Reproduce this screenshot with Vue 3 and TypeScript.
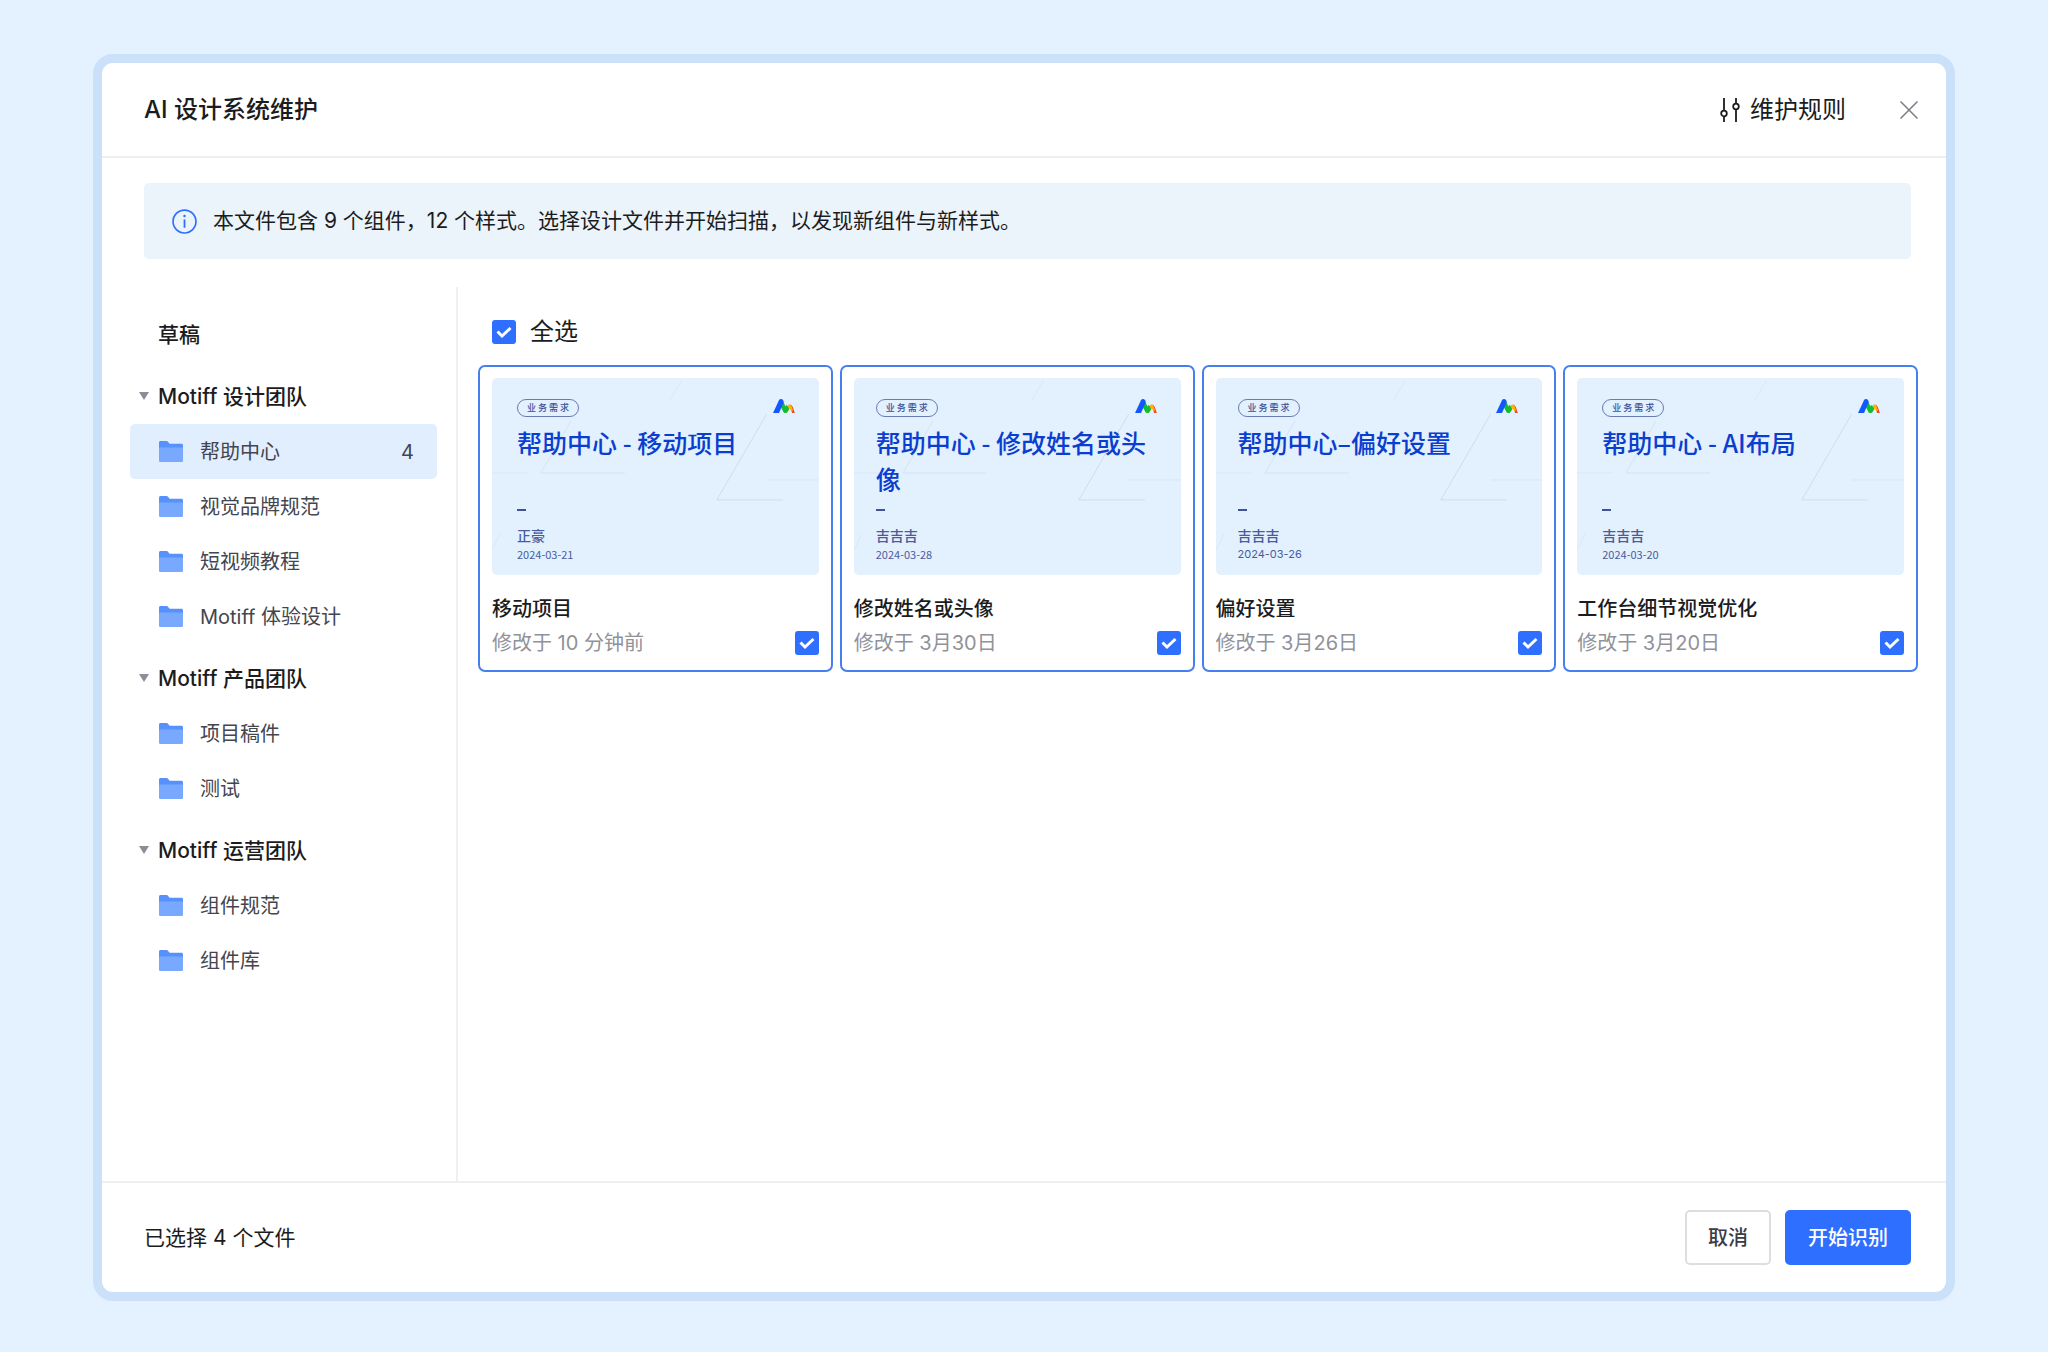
<script setup lang="ts">
import { computed, ref } from 'vue'

interface Folder {
  name: string
  count?: number
}

interface Team {
  name: string
  folders: Folder[]
}

interface DesignFile {
  id: string
  name: string
  modified: string
  cover: string
  author: string
  date: string
  layout: 'loose' | 'snug'
  latinDate?: boolean
}

const teams: Team[] = [
  {
    name: 'Motiff 设计团队',
    folders: [
      { name: '帮助中心', count: 4 },
      { name: '视觉品牌规范' },
      { name: '短视频教程' },
      { name: 'Motiff 体验设计' },
    ],
  },
  { name: 'Motiff 产品团队', folders: [{ name: '项目稿件' }, { name: '测试' }] },
  { name: 'Motiff 运营团队', folders: [{ name: '组件规范' }, { name: '组件库' }] },
]

const files: DesignFile[] = [
  { id: 'move', name: '移动项目', modified: '修改于 10 分钟前', cover: '帮助中心 - 移动项目', author: '正豪', date: '2024-03-21', layout: 'loose' },
  { id: 'profile', name: '修改姓名或头像', modified: '修改于 3月30日', cover: '帮助中心 - 修改姓名或头像', author: '吉吉吉', date: '2024-03-28', layout: 'snug' },
  { id: 'prefs', name: '偏好设置', modified: '修改于 3月26日', cover: '帮助中心–偏好设置', author: '吉吉吉', date: '2024-03-26', layout: 'snug', latinDate: true },
  { id: 'workbench', name: '工作台细节视觉优化', modified: '修改于 3月20日', cover: '帮助中心 - AI布局', author: '吉吉吉', date: '2024-03-20', layout: 'loose' },
]

const activeFolder = ref('帮助中心')
const selected = ref<string[]>(files.map((f) => f.id))

const allSelected = computed({
  get: () => selected.value.length === files.length,
  set: (on: boolean) => {
    selected.value = on ? files.map((f) => f.id) : []
  },
})
</script>

<template>
  <div class="page">
    <section class="dialog" role="dialog" aria-labelledby="dialog-title">
      <header class="header">
        <h1 id="dialog-title" class="title">AI 设计系统维护</h1>
        <div class="header-actions">
          <button type="button" class="rules">
            <svg class="rules-icon" viewBox="0 0 20 24" fill="none" stroke="currentColor" stroke-width="1.8">
              <path d="M4 0v12.4M4 18.6V24M16 0v5.4M16 11.6V24" />
              <circle cx="4" cy="15.5" r="2.8" />
              <circle cx="16" cy="8.5" r="2.8" />
            </svg>
            维护规则
          </button>
          <button type="button" class="close" aria-label="关闭">
            <svg viewBox="0 0 18 18" fill="none" stroke="currentColor" stroke-width="1.5">
              <path d="M.5.5l17 17M17.5.5l-17 17" />
            </svg>
          </button>
        </div>
      </header>

      <div class="notice">
        <svg class="notice-icon" viewBox="0 0 24 24" fill="none" stroke="#2f6fff">
          <circle cx="12" cy="12" r="11" stroke-width="1.6" />
          <path d="M12 10v8" stroke-width="1.7" />
          <circle cx="12" cy="6.8" r="1.2" fill="#2f6fff" stroke="none" />
        </svg>
        <p>本文件包含 9 个组件，12 个样式。选择设计文件并开始扫描，以发现新组件与新样式。</p>
      </div>

      <div class="body">
        <nav class="sidebar">
          <button type="button" class="row heading">草稿</button>
          <div v-for="team in teams" :key="team.name" class="team">
            <button type="button" class="row heading">
              <span class="caret"></span>{{ team.name }}
            </button>
            <button
              v-for="folder in team.folders"
              :key="folder.name"
              type="button"
              class="row folder"
              :class="{ active: folder.name === activeFolder }"
              @click="activeFolder = folder.name"
            >
              <svg class="folder-icon" viewBox="0 0 24 21">
                <path d="M0 1.6C0 .7.7 0 1.6 0h6c.5 0 .9.2 1.2.6l1.3 1.7c.2.3.5.4.8.4h11.5c.9 0 1.600.7 1.600 1.600V12H0z" fill="#5791fb" />
                <path d="M0 7.5C0 7 .4 6.600.9 6.600h22.200c.5 0 .9.4.9.9v11.900c0 .9-.7 1.600-1.600 1.600H1.600C.7 21 0 20.300 0 19.400z" fill="#78a9ff" />
              </svg>
              <span class="folder-name">{{ folder.name }}</span>
              <span v-if="folder.count" class="count">{{ folder.count }}</span>
            </button>
          </div>
        </nav>

        <main class="content">
          <label class="select-all">
            <input v-model="allSelected" type="checkbox" class="check" />
            全选
          </label>
          <div class="grid">
            <label
              v-for="file in files"
              :key="file.id"
              class="card"
              :class="{ picked: selected.includes(file.id) }"
            >
              <span class="cover" :class="file.layout">
                <svg class="cover-lines" viewBox="0 0 327 197" preserveAspectRatio="none" fill="none" stroke="#c8d4e4" stroke-width="1">
                  <path d="M133 95H49L79 43" opacity=".5" />
                  <path d="M291 122H225L275 36" opacity=".7" />
                  <path d="M275 102H327M0 95H36M178 22L190 2M0 172L8 156" opacity=".3" />
                </svg>
                <span class="cover-top">
                  <span class="badge">业务需求</span>
                  <svg class="logo" viewBox="0 0 22 14">
                    <path d="M17 5.600Q19.200 6 20 8.500L21.800 14H19.200L16.500 7z" fill="#f0452f" />
                    <path d="M13.500 9L15 6.300Q15.600 5.300 16.800 5.400Q18 5.600 18.500 7L20 11.500L18.600 12L16.800 9.500L14.500 13z" fill="#ffb400" />
                    <path d="M9.600 1.500L12.600 7.500L13.800 5.800L16.200 10L14.400 13.200Q14 14 13 14H12Q11 14 10.500 13.200L7.800 8z" fill="#12bd35" />
                    <path d="M0 14L6 1.200Q6.600 0 8 0Q9.400 0 10 1.200L10.800 3L6 14z" fill="#1257ff" />
                  </svg>
                </span>
                <span class="cover-title">{{ file.cover }}</span>
                <span class="cover-foot">
                  <span class="dash"></span>
                  <span class="author">{{ file.author }}</span>
                  <span class="date" :class="{ latin: file.latinDate }">{{ file.date }}</span>
                </span>
              </span>
              <span class="file-name">{{ file.name }}</span>
              <span class="meta">
                <span>{{ file.modified }}</span>
                <input v-model="selected" type="checkbox" class="check" :value="file.id" />
              </span>
            </label>
          </div>
        </main>
      </div>

      <footer class="footer">
        <span class="summary">已选择 {{ selected.length }} 个文件</span>
        <div class="footer-actions">
          <button type="button" class="btn">取消</button>
          <button type="button" class="btn primary">开始识别</button>
        </div>
      </footer>
    </section>
  </div>
</template>

<style>
body {
  margin: 0;
  background: #e4f1ff;
}
</style>

<style scoped>
.page {
  box-sizing: border-box;
  display: flex;
  min-height: 100vh;
  padding: 54px 93px 51px;
  background: #e4f1ff;
  color: #1b1c20;
  font-family: Inter, "Noto Sans CJK SC", sans-serif;
  font-size: 20px;
  line-height: 32px;
}

.page *,
.page *::before {
  box-sizing: border-box;
}

button {
  margin: 0;
  padding: 0;
  border: 0;
  background: none;
  color: inherit;
  font: inherit;
  cursor: pointer;
}

svg {
  display: block;
  flex: none;
}

.dialog {
  display: flex;
  flex: 1;
  flex-direction: column;
  min-width: 0;
  border: 9px solid #cbe1fa;
  border-radius: 20px;
  background: #fff;
}

.header {
  display: flex;
  align-items: center;
  justify-content: space-between;
  height: 95px;
  padding: 0 28px 0 42px;
  border-bottom: 2px solid #eeeff1;
}

.title {
  margin: 0;
  font-size: 24px;
  font-weight: 500;
}

.header-actions {
  display: flex;
  align-items: center;
  gap: 54px;
}

.rules {
  display: flex;
  align-items: center;
  gap: 10px;
  font-size: 24px;
}

.rules-icon {
  width: 20px;
  height: 24px;
}

.close {
  color: #7b7d84;
}

.close svg {
  width: 18px;
  height: 18px;
}

.notice {
  display: flex;
  align-items: center;
  gap: 16px;
  min-height: 76px;
  margin: 25px 35px 0 42px;
  padding: 0 28px;
  border-radius: 5px;
  background: #ecf4fb;
}

.notice p {
  margin: 0;
  font-size: 21px;
}

.notice-icon {
  width: 25px;
  height: 25px;
}

.body {
  display: flex;
  flex: 1;
  margin-top: 28px;
}

.sidebar {
  flex: none;
  width: 356px;
  padding: 20px 19px 20px 28px;
  border-right: 2px solid #eeeff1;
}

.row {
  display: flex;
  align-items: center;
  width: 100%;
  height: 55px;
  border-radius: 5px;
  text-align: left;
}

.heading {
  position: relative;
  padding-left: 28px;
  font-size: 21px;
  font-weight: 500;
}

.team {
  margin-top: 7px;
}

.caret {
  position: absolute;
  top: 23px;
  left: 9px;
  border: 5px solid transparent;
  border-top: 8px solid #8b8d98;
  border-bottom: 0;
}

.folder {
  gap: 17px;
  padding: 0 23px 0 29px;
  color: #43454f;
}

.folder.active {
  background: #e1eefe;
}

.folder-icon {
  width: 24px;
  height: 21px;
}

.folder-name {
  flex: 1;
}

.content {
  flex: 1;
  min-width: 0;
  padding: 20px 28px 20px 20px;
}

.select-all {
  display: inline-flex;
  align-items: center;
  gap: 14px;
  height: 50px;
  margin-bottom: 8px;
  padding-left: 14px;
  font-size: 24px;
}

.check {
  flex: none;
  width: 24px;
  height: 24px;
  margin: 0;
  border: 2px solid #c9ccd4;
  border-radius: 3px;
  appearance: none;
  background: #fff;
  cursor: pointer;
}

.check:checked {
  border: 0;
  background: #2f6fff url("data:image/svg+xml,%3Csvg xmlns='http://www.w3.org/2000/svg' viewBox='0 0 24 24'%3E%3Cpath d='M5.500 11.500l4.500 4.500 8.500-8' fill='none' stroke='%23fff' stroke-width='3'/%3E%3C/svg%3E") center / 24px 24px no-repeat;
}

.grid {
  display: grid;
  grid-template-columns: repeat(4, minmax(0, 1fr));
  gap: 7px;
}

.card {
  display: flex;
  flex-direction: column;
  padding: 11px 12px 9px;
  border: 2px solid #e4e6ea;
  border-radius: 7px;
  cursor: pointer;
}

.card.picked {
  border-color: #4680f0;
}

.cover {
  position: relative;
  display: flex;
  flex-direction: column;
  aspect-ratio: 327 / 197;
  padding: 21px 24px 14px 22px;
  border-radius: 5px;
  background: #e3f0fe;
  overflow: hidden;
}

.cover.loose {
  padding-left: 25px;
}

.cover-lines {
  position: absolute;
  inset: 0;
  width: 100%;
  height: 100%;
}

.cover-top,
.cover-title,
.cover-foot {
  position: relative;
}

.cover-top {
  display: flex;
  justify-content: space-between;
}

.badge {
  padding: 0 7px 0 9px;
  border: 1px solid #6a7bb4;
  border-radius: 9px;
  color: #3a4f96;
  font-size: 9px;
  font-weight: 500;
  letter-spacing: 2px;
  line-height: 16px;
}

.logo {
  width: 22px;
  height: 14px;
}

.cover-title {
  margin-top: 7px;
  color: #0a3ed0;
  font-family: "Noto Sans CJK SC", sans-serif;
  font-size: 25px;
  font-weight: 500;
  line-height: 36px;
}

.cover-foot {
  display: flex;
  flex-direction: column;
  margin-top: auto;
  color: #4a5c9e;
  font-family: "Noto Sans CJK SC", sans-serif;
}

.dash {
  width: 9px;
  height: 2px;
  margin-bottom: 14px;
  background: #3f529a;
}

.author {
  font-size: 14px;
  font-weight: 500;
  line-height: 20px;
}

.date {
  margin-top: 2px;
  font-size: 11px;
  line-height: 14px;
}

.date.latin {
  font-family: Inter, sans-serif;
}

.file-name {
  margin-top: 18px;
  font-weight: 500;
}

.meta {
  display: flex;
  align-items: center;
  justify-content: space-between;
  height: 36px;
  color: #90929a;
}

.footer {
  display: flex;
  align-items: center;
  justify-content: space-between;
  height: 111px;
  padding: 0 35px 0 42px;
  border-top: 2px solid #eeeff1;
}

.summary {
  font-size: 21px;
}

.footer-actions {
  display: flex;
  gap: 14px;
}

.btn {
  height: 55px;
  padding: 0 21px;
  border: 2px solid #dcdee2;
  border-radius: 5px;
  color: #3b3c46;
  font-weight: 500;
}

.btn.primary {
  border-color: #2f6fff;
  background: #2f6fff;
  color: #fff;
}
</style>
